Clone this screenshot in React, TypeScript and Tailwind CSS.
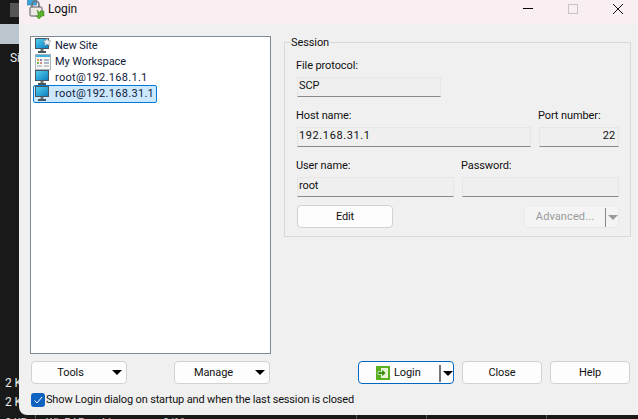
const FONT = "font-['Roboto',sans-serif]";

function Monitor({ star, id }: { star?: boolean; id: string }) {
  return (
    <svg width="16" height="16" viewBox="0 0 16 16" className="shrink-0">
      <defs>
        <linearGradient id={id} x1="0" y1="0" x2="1" y2="1">
          <stop offset="0" stopColor="#4fd0ee" />
          <stop offset="1" stopColor="#0f7fc0" />
        </linearGradient>
      </defs>
      <rect x="0" y="0" width="14" height="11" fill="#4a5560" />
      <rect x="1" y="1" width="12" height="9" fill={`url(#${id})`} />
      <rect x="5.500" y="11" width="3" height="2" fill="#6a7378" />
      <rect x="3" y="13" width="8" height="2" fill="#4b5459" />
      {star && (
        <path
          d="M12 0l1.200 2.600 2.800.3-2.100 1.900.6 2.800-2.500-1.400-2.500 1.400.6-2.800L8 2.900l2.800-.3z"
          fill="#eceef2"
          stroke="#8a8f98"
          strokeWidth="0.5"
        />
      )}
    </svg>
  );
}

function WorkspaceIcon() {
  return (
    <svg width="16" height="16" viewBox="0 0 16 16" className="shrink-0">
      <rect x="0.500" y="0.500" width="15" height="15" fill="#f7f7f4" stroke="#a9b4bc" />
      <rect x="1" y="1" width="14" height="2" fill="#3fb0dc" />
      <rect x="2" y="5" width="2" height="2" fill="#d9a441" />
      <rect x="5" y="5" width="2" height="2" fill="#8f7fc0" />
      <rect x="9" y="5" width="5" height="2" fill="#a9b8c4" />
      <rect x="2" y="8" width="2" height="2" fill="#7fb35a" />
      <rect x="5" y="8" width="2" height="2" fill="#d98a8a" />
      <rect x="9" y="8" width="5" height="2" fill="#a9b8c4" />
      <rect x="2" y="11" width="5" height="2" fill="#c8ccd0" />
      <rect x="9" y="11" width="5" height="2" fill="#c8ccd0" />
    </svg>
  );
}

function AppIcon() {
  return (
    <svg width="18" height="20" viewBox="0 0 18 20" className="shrink-0">
      <rect x="0.500" y="0" width="9" height="6" fill="#3aa7dc" stroke="#2a6f9c" strokeWidth="0.600" />
      <path d="M5 9V5.500a3.500 3.500 0 0 1 7 0V9" fill="none" stroke="#6d7278" strokeWidth="1.600" />
      <rect x="3" y="8" width="12" height="9" rx="1" fill="#eceae2" stroke="#55595e" />
      <path d="M10 11l3 3v-2h4v5h-2l-3 3-3-3h2v-2z" fill="#5bb02c" stroke="#3a7d17" strokeWidth="0.500" />
    </svg>
  );
}

function LoginIcon() {
  return (
    <svg width="14" height="14" viewBox="0 0 14 14" className="shrink-0">
      <rect width="14" height="14" fill="#5ab01e" />
      <rect x="5" y="2" width="7" height="10" fill="#e9f6d6" />
      <path d="M2 5.500h4V3l4 4-4 4V8.500H2z" fill="#3f8f12" stroke="#fff" strokeWidth="0.600" />
    </svg>
  );
}

function Caret({ disabled }: { disabled?: boolean }) {
  return (
    <span
      className={`h-0 w-0 border-x-[5px] border-t-[5px] border-x-transparent ${
        disabled ? "border-t-[#9a9a9a]" : "border-t-black"
      }`}
    />
  );
}

function Field({ value, className }: { value?: string; className: string }) {
  return (
    <div
      className={`flex h-5 items-center border border-[#e6e6e6] border-b-[#8a8a8a] bg-[#efefef] px-[1px] pb-[2px] text-[#111] ${className}`}
    >
      {value}
    </div>
  );
}

function Btn({
  children,
  className,
  focused,
}: {
  children: React.ReactNode;
  className: string;
  focused?: boolean;
}) {
  return (
    <div
      className={`flex h-[23px] items-center rounded-[4px] border bg-[#fdfdfd] pt-[1px] text-[#111] ${
        focused ? "border-[#0067c0]" : "border-[#d2d2d2]"
      } ${className}`}
    >
      {children}
    </div>
  );
}

const SESSIONS = [
  { label: "New Site", icon: <Monitor star id="m1" /> },
  { label: "My Workspace", icon: <WorkspaceIcon /> },
  { label: "root@192.168.1.1", icon: <Monitor id="m2" />, ip: true },
  { label: "root@192.168.31.1", icon: <Monitor id="m3" />, ip: true, selected: true },
];

export default function App() {
  return (
    <div className={`relative flex h-[419px] w-[638px] overflow-hidden whitespace-nowrap bg-[#191919] text-[11px] leading-4 tracking-[-0.1px] ${FONT}`}>
      {/* explorer window behind the dialog */}
      <div className="flex w-[19px] shrink-0 flex-col overflow-hidden text-[12px] text-[#e8e8e8]">
        <div className="h-6 pl-[10px] pt-[3px]">
          <div className="h-[14px] w-[9px] bg-[#555]" />
        </div>
        <div className="h-5 bg-[#bcc6cf]" />
        <div className="mt-[6px] pl-[10px]">Si</div>
        <div className="mt-[309px] pl-[5px]">2 K</div>
        <div className="mt-[3px] pl-[5px]">2 K</div>
      </div>

      <div className="flex h-[415px] w-[619px] shrink-0 flex-col overflow-hidden rounded-bl-[8px] bg-[#f0f0f0]">
        <div className="flex h-6 shrink-0 items-center bg-[#f9eef2]">
          <div className="ml-[8px] -mt-[7px]">
            <AppIcon />
          </div>
          <span className="ml-[3px] -mt-[7px] text-[12px] text-[#111]">Login</span>
          <div className="ml-auto mr-[15px] flex items-center gap-[35px] -mt-[7px]">
            <div className="h-[1px] w-[10px] bg-black" />
            <div className="h-[10px] w-[10px] border border-[#c4c4c4]" />
            <svg width="10" height="10" viewBox="0 0 10 10">
              <path d="M0 0l10 10M10 0L0 10" stroke="#111" fill="none" />
            </svg>
          </div>
        </div>

        <div className="flex pl-[11px] pt-3">
          <div className="h-[318px] w-[241px] shrink-0 border border-[#7f8a94] bg-white px-[3px] pt-[1px] text-[#10203a]">
            {SESSIONS.map((s) => (
              <div
                key={s.label}
                className={`flex h-4 items-center gap-[4px] pl-[1px] ${
                  s.selected ? "w-[122px] rounded-[1px] bg-[#cce8ff] outline outline-[#0078d7]" : ""
                }`}
              >
                {s.icon}
                <span className={s.ip ? "tracking-[0.3px]" : ""}>{s.label}</span>
              </div>
            ))}
          </div>

          <div className="relative ml-[13px] mt-[6px] h-[195px] w-[347px] shrink-0 border border-[#d9d9d9] pl-[12px] text-[#111]">
            <span className="absolute -top-[8px] left-[6px] bg-[#f0f0f0] pr-[1px]">Session</span>
            <div className="-ml-[1px] mt-[15px]">File protocol:</div>
            <Field value="SCP" className="mt-[3px] w-[144px]" />
            <div className="mt-[11px] flex">
              <div>
                <div className="-ml-[1px]">Host name:</div>
                <Field value="192.168.31.1" className="mt-[3px] w-[234px] tracking-[0.6px]" />
              </div>
              <div className="ml-[8px]">
                <div className="-ml-[1px]">Port number:</div>
                <Field value="22" className="mt-[3px] w-[80px] justify-end pr-[3px]" />
              </div>
            </div>
            <div className="mt-[11px] flex">
              <div>
                <div className="-ml-[1px]">User name:</div>
                <Field value="root" className="mt-[3px] w-[157px]" />
              </div>
              <div className="ml-[8px]">
                <div className="-ml-[1px]">Password:</div>
                <Field className="mt-[3px] w-[157px]" />
              </div>
            </div>
            <div className="mt-2 flex">
              <Btn className="w-[96px] justify-center">Edit</Btn>
              <div className="ml-[131px] flex h-[23px] w-[95px] items-center rounded-[4px] border border-[#e9e9e9] bg-[#f4f4f4] pt-[1px] text-[#9a9a9a]">
                <span className="w-[80px] text-center tracking-[0.1px]">Advanced...</span>
                <span className="h-[19px] w-[1px] bg-[#8a8a8a]" />
                <span className="ml-[2px] flex">
                  <Caret disabled />
                </span>
              </div>
            </div>
          </div>
        </div>

        <div className="mt-[7px] flex pl-3">
          <Btn className="relative w-[96px] justify-center pr-[17px]">
            Tools
            <span className="absolute right-[4px] top-[8px] flex">
              <Caret />
            </span>
          </Btn>
          <Btn className="relative ml-[47px] w-[96px] justify-center pr-[17px]">
            Manage
            <span className="absolute right-[4px] top-[8px] flex">
              <Caret />
            </span>
          </Btn>
          <Btn focused className="ml-[88px] w-[96px]">
            <span className="ml-[17px]">
              <LoginIcon />
            </span>
            <span className="ml-[4px] w-[45px]">Login</span>
            <span className="h-[17px] w-[2px] bg-[#777]" />
            <span className="ml-[2px] flex">
              <Caret />
            </span>
          </Btn>
          <Btn className="ml-2 w-[80px] justify-center">Close</Btn>
          <Btn className="ml-2 w-[80px] justify-center">Help</Btn>
        </div>

        <div className="mt-2 flex items-center pl-3 text-[#111]">
          <div className="flex h-[14px] w-[14px] items-center justify-center rounded-[3px] bg-[#0f62c0]">
            <svg width="10" height="10" viewBox="0 0 10 10">
              <path d="M1.500 5.500l2.500 2.500 5-6" fill="none" stroke="#fff" />
            </svg>
          </div>
          <span className="ml-[1px] tracking-[-0.16px]">Show Login dialog on startup and when the last session is closed</span>
        </div>
      </div>

      {/* status row of the window behind, just visible under the dialog */}
      <div className="absolute left-0 top-[415px] flex h-1 w-full overflow-hidden bg-[#191919] pl-[5px] text-[#d8d8d8]">
        <span className="w-[30px]">0 KB</span>
        <span className="w-[128px] border-l border-[#555] pl-[10px]">WinRAR archive</span>
        <span className="w-[193px]">9/11</span>
        <span className="w-[70px] border-l border-[#555]" />
        <span className="w-[120px] border-l border-[#555]" />
        <span className="flex-1 border-l border-[#555]" />
      </div>
    </div>
  );
}
